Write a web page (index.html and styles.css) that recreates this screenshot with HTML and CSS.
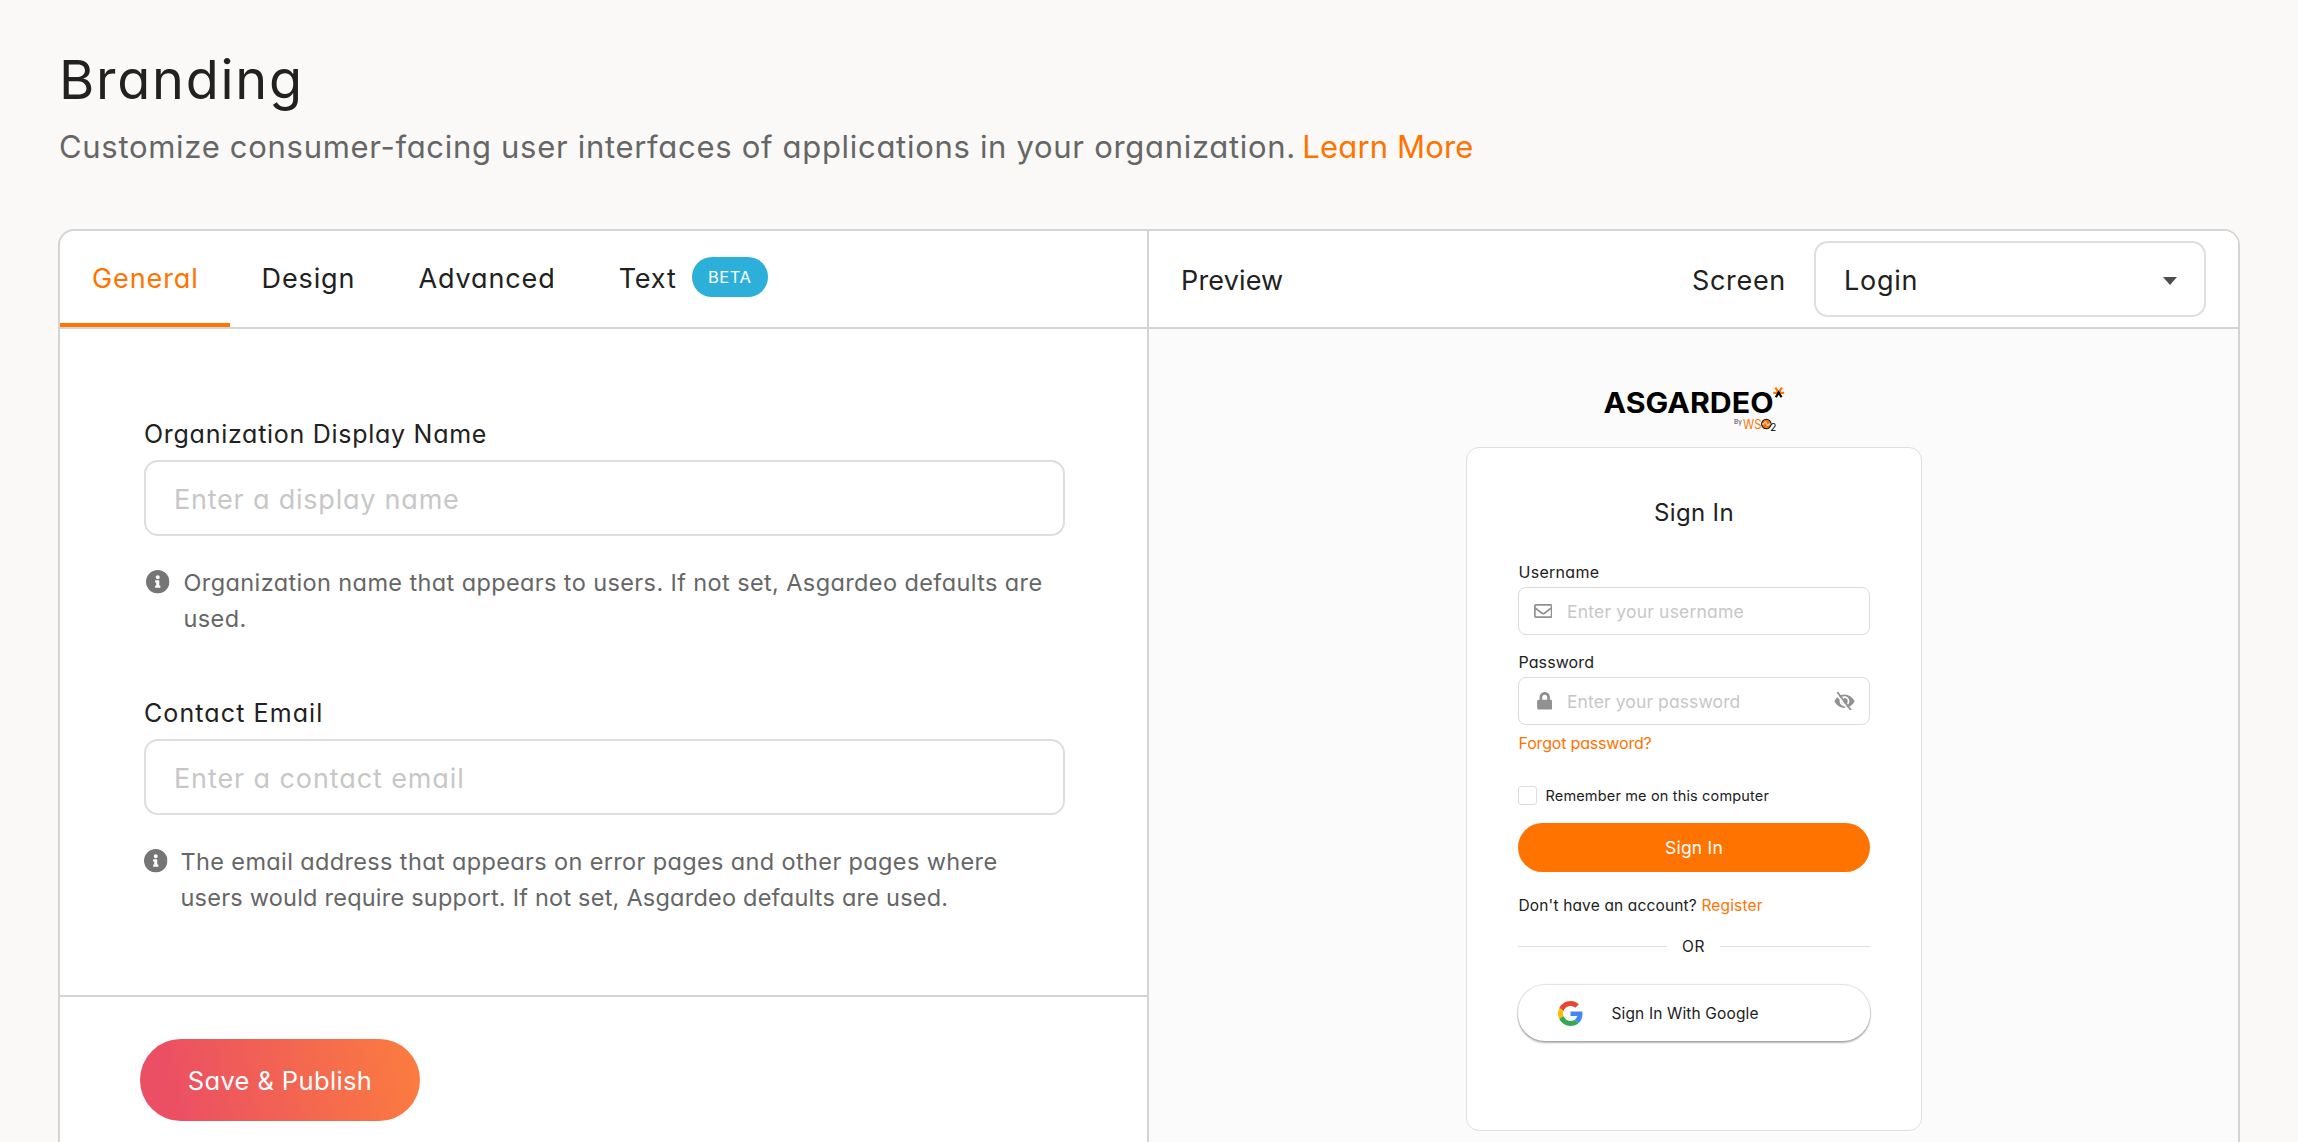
FILE: index.html
```
<!DOCTYPE html>
<html lang="en">
<head>
<meta charset="utf-8">
<title>Branding</title>
<link rel="stylesheet" href="styles.css">
</head>
<body>
<svg class="sprite" aria-hidden="true">
  <symbol id="info" viewBox="8 8 496 496"><path d="M256 8C119.043 8 8 119.083 8 256c0 136.997 111.043 248 248 248s248-111.003 248-248C504 119.083 392.957 8 256 8zm0 110c23.196 0 42 18.804 42 42s-18.804 42-42 42-42-18.804-42-42 18.804-42 42-42zm56 254c0 6.627-5.373 12-12 12h-88c-6.627 0-12-5.373-12-12v-24c0-6.627 5.373-12 12-12h12v-64h-12c-6.627 0-12-5.373-12-12v-24c0-6.627 5.373-12 12-12h64c6.627 0 12 5.373 12 12v100h12c6.627 0 12 5.373 12 12v24z"/></symbol>
</svg>
<header class="page-header">
  <h1>Branding</h1>
  <p><span>Customize consumer-facing user interfaces of applications in your organization.</span> <a href="#">Learn More</a></p>
</header>
<main class="panel">
  <section class="settings">
    <nav class="tabs">
      <a class="tab active" href="#">General</a>
      <a class="tab" href="#">Design</a>
      <a class="tab" href="#">Advanced</a>
      <a class="tab" href="#">Text <span class="badge">BETA</span></a>
    </nav>
    <form class="form">
      <div class="field">
        <label>Organization Display Name</label>
        <input type="text" placeholder="Enter a display name">
        <div class="hint hint-wide">
          <svg class="hint-icon"><use href="#info"/></svg>
          <span>Organization name that appears to users. If not set, Asgardeo defaults are<br>used.</span>
        </div>
      </div>
      <div class="field field-email">
        <label>Contact Email</label>
        <input type="text" placeholder="Enter a contact email">
        <div class="hint">
          <svg class="hint-icon"><use href="#info"/></svg>
          <span>The email address that appears on error pages and other pages where<br><span class="tight">users would require support. If not set, Asgardeo defaults are used.</span></span>
        </div>
      </div>
    </form>
    <footer class="actions"><button class="save">Save &amp; Publish</button></footer>
  </section>
  <section class="preview">
    <div class="preview-header">
      <span class="preview-title">Preview</span>
      <span class="screen-label">Screen</span>
      <div class="select"><span>Login</span><i class="caret"></i></div>
    </div>
    <div class="preview-body">
      <svg class="logo" width="181" height="44" viewBox="0 0 181 44">
        <text class="logo-name" x="-0.5" y="25.7" textLength="170" lengthAdjust="spacingAndGlyphs">ASGARDEO</text>
        <g fill="none" stroke-width="2.2">
          <path stroke="#ff7300" d="M174.2 5.6 171 .3M174.2 5.6 177.5 .3M174.2 5.6H168.9M174.2 5.6H179.8" transform="translate(.4 .2)"/>
          <path stroke="#000" d="M171.9 10.3 174.6 5.4 177.5 10.3"/>
        </g>
        <text class="logo-by" x="130" y="36.5">By</text>
        <text class="logo-wso" x="139" y="41.800" textLength="18.5" lengthAdjust="spacingAndGlyphs">WS</text>
        <circle cx="162.3" cy="37" r="4.7" fill="#ff7300" stroke="#111" stroke-width="1.1"/>
        <path d="M158 37h2l1.500-2.600 2 4.600 1.400-2h2" fill="none" stroke="#fff" stroke-width=".9"/>
        <text class="logo-two" x="166.300" y="43.600">2</text>
      </svg>
      <div class="login-card">
        <h2>Sign In</h2>
        <label class="login-label">Username</label>
        <div class="login-input">
          <svg class="mail" viewBox="0 64 512 384"><path d="M464 64H48C21.490 64 0 85.490 0 112v288c0 26.510 21.490 48 48 48h416c26.510 0 48-21.490 48-48V112c0-26.510-21.490-48-48-48zm0 48v40.805c-22.422 18.259-58.168 46.651-134.587 106.490-16.841 13.247-50.201 45.072-73.413 44.701-23.208.375-56.579-31.459-73.413-44.701C106.180 199.465 70.425 171.067 48 152.805V112h416zM48 400V214.398c22.914 18.251 55.409 43.862 104.938 82.646 21.857 17.205 60.134 55.186 103.062 54.955 42.717.231 80.509-37.199 103.053-54.947 49.528-38.783 82.032-64.401 104.947-82.653V400H48z"/></svg>
          <input type="text" placeholder="Enter your username">
        </div>
        <label class="login-label login-label-next">Password</label>
        <div class="login-input password">
          <svg class="lock" viewBox="0 0 448 512"><path d="M400 224h-24v-72C376 68.200 307.800 0 224 0S72 68.200 72 152v72H48c-26.500 0-48 21.500-48 48v192c0 26.500 21.500 48 48 48h352c26.500 0 48-21.500 48-48V272c0-26.500-21.500-48-48-48zm-104 0H152v-72c0-39.700 32.300-72 72-72s72 32.300 72 72v72z"/></svg>
          <input type="text" placeholder="Enter your password">
          <svg class="eye" viewBox="0 0 576 512">
            <path fill-rule="evenodd" d="M6 256C75 135 175 72 288 72s213 63 282 184c-69 121-169 184-282 184S75 377 6 256zM288 120a136 136 0 1 0 0 272 136 136 0 1 0 0-272z"/>
            <path d="M288 168a88 88 0 1 1-88 88c0-9 1-16 3-23a42 42 0 1 0 60-61c8-3 16-4 25-4z"/>
            <path d="M62 48 412 528" stroke="#fff" stroke-width="52"/>
            <path d="M103 22 458 490" stroke="#919191" stroke-width="52" stroke-linecap="round"/>
          </svg>
        </div>
        <a class="forgot" href="#">Forgot password?</a>
        <label class="remember"><i class="box"></i>Remember me on this computer</label>
        <button class="sign-in">Sign In</button>
        <p class="register">Don't have an account? <a href="#">Register</a></p>
        <div class="or"><span>OR</span></div>
        <button class="google">
          <svg viewBox="0 0 48 48" width="25" height="25">
            <path fill="#EA4335" d="M24 9.500c3.540 0 6.710 1.220 9.210 3.600l6.850-6.850C35.900 2.380 30.470 0 24 0 14.620 0 6.510 5.380 2.560 13.220l7.980 6.190C12.430 13.720 17.740 9.500 24 9.500z"/>
            <path fill="#4285F4" d="M46.980 24.550c0-1.570-.15-3.090-.38-4.550H24v9.020h12.940c-.58 2.960-2.260 5.480-4.780 7.180l7.730 6c4.510-4.180 7.090-10.360 7.090-17.650z"/>
            <path fill="#FBBC05" d="M10.530 28.590c-.48-1.450-.76-2.990-.76-4.590s.27-3.140.76-4.590l-7.980-6.190C.92 16.460 0 20.120 0 24s.92 7.540 2.560 10.780l7.970-6.190z"/>
            <path fill="#34A853" d="M24 48c6.480 0 11.930-2.130 15.890-5.810l-7.730-6c-2.150 1.450-4.920 2.300-8.160 2.300-6.260 0-11.570-4.220-13.470-9.910l-7.980 6.190C6.510 42.620 14.620 48 24 48z"/>
          </svg>
          <span>Sign In With Google</span>
        </button>
      </div>
    </div>
  </section>
</main>
</body>
</html>
```
FILE: styles.css
```
* { box-sizing: border-box; }
html, body { height: 100%; }
body {
  margin: 0;
  padding: 49px 58px 0;
  display: flex;
  flex-direction: column;
  overflow: hidden;
  background: #faf9f8;
  color: #212121;
  font-family: Inter, "Liberation Sans", sans-serif;
  font-feature-settings: "cv11";
}
a { color: #ff7300; text-decoration: none; }
button, input { font: inherit; font-feature-settings: inherit; letter-spacing: inherit; margin: 0; }
.sprite { display: none; }

.page-header { flex: none; height: 180px; padding-left: 1px; white-space: nowrap; }
h1 { margin: 0; font-size: 54px; font-weight: 400; line-height: 61px; letter-spacing: .032em; }
.page-header p { margin: 21px 0 0; font-size: 31px; line-height: 32px; color: #666; letter-spacing: .0225em; }
.page-header p a { letter-spacing: .005em; margin-left: -3px; }

.panel {
  flex: none;
  height: 960px;
  display: flex;
  border: 2px solid #d4d4d5;
  border-radius: 16px;
  background: #fff;
  overflow: hidden;
}
.settings { width: 1089px; flex: none; border-right: 2px solid #d4d4d5; }
.tabs { height: 98px; display: flex; border-bottom: 2px solid #d4d4d5; font-size: 27px; line-height: 96px; letter-spacing: .033em; }
.tab { height: 96px; padding: 0 31.5px; color: #212121; display: flex; }
.tab.active { width: 170px; padding-left: 32px; padding-right: 0; color: #ff7300; border-bottom: 4px solid #ff7300; }
.badge {
  width: 76px;
  height: 40px;
  margin: 26px 0 0 15px;
  border-radius: 20px;
  background: #2cb0da;
  color: #fff;
  font-size: 16.5px;
  line-height: 40px;
  letter-spacing: .03em;
  text-align: center;
}

.form { height: 666px; padding: 90px 82px 0 84px; }
.field { display: flex; flex-direction: column; }
.field-email { margin-top: 61px; }
.field label { font-size: 25px; line-height: 30px; letter-spacing: .029em; }
.field-email label { letter-spacing: .044em; }
.field input {
  height: 76px;
  margin-top: 11px;
  padding: 2px 28px 0;
  border: 2px solid #dededf;
  border-radius: 14px;
  font-size: 27px;
  letter-spacing: .029em;
  outline: 0;
}
.field-email input { letter-spacing: .033em; }
input::placeholder { color: #c7c7c7; opacity: 1; }
.hint { display: flex; margin-top: 29px; gap: 13px; font-size: 23.5px; line-height: 36px; letter-spacing: .0155em; color: #666; white-space: nowrap; }
.hint-wide { padding-left: 2px; gap: 14px; letter-spacing: .0165em; }
.tight { letter-spacing: .0095em; }
.hint-icon { width: 23.5px; height: 23.5px; margin-top: 5px; fill: #757575; flex: none; }

.actions { height: 400px; padding: 42px 80px; border-top: 2px solid #d4d4d5; }
.save {
  display: block;
  width: 280px;
  height: 82px;
  border: 0;
  border-radius: 41px;
  background: linear-gradient(77deg, #eb4f63 12%, #fb7b40 96%);
  color: #fff;
  font-size: 25.5px;
  letter-spacing: .015em;
}

.preview { flex: 1; background: #fbfbfb; }
.preview-header {
  height: 98px;
  padding: 0 32px;
  display: flex;
  align-items: center;
  border-bottom: 2px solid #d4d4d5;
  background: #fff;
  font-size: 27px;
  line-height: 34px;
}
.preview-title { padding-top: 3px; letter-spacing: .006em; }
.screen-label { padding-top: 3px; margin: 0 28px 0 auto; letter-spacing: .026em; }
.select {
  width: 392px;
  height: 76px;
  padding: 3px 27px 0 28px;
  display: flex;
  align-items: center;
  justify-content: space-between;
  border: 2px solid #dededf;
  border-radius: 14px;
  letter-spacing: .028em;
}
.caret { border: 7.5px solid transparent; border-top: 8px solid #4d4d4d; border-bottom: 0; }

.preview-body { padding-top: 58px; display: flex; flex-direction: column; align-items: center; }
.logo { display: block; overflow: visible; margin-left: 2px; }
.logo-name { font-size: 28px; font-weight: 700; }
.logo-by { font-size: 6.5px; fill: #444; }
.logo-wso { font-size: 13.5px; fill: #ff7300; }
.logo-two { font-size: 10px; }

.login-card {
  width: 456px;
  height: 684px;
  margin-top: 16px;
  padding: 49px 51px 0;
  display: flex;
  flex-direction: column;
  border: 1px solid #dfdfe0;
  border-radius: 13px;
  background: #fff;
}
h2 { margin: 0; font-size: 24px; font-weight: 400; line-height: 31px; letter-spacing: .014em; text-align: center; text-indent: 1px; }
.login-label { margin-top: 34px; padding-left: 1px; font-size: 16px; line-height: 20px; letter-spacing: .018em; }
.login-label-next { margin-top: 17px; letter-spacing: .006em; }
.login-input { height: 48px; margin-top: 5px; padding: 0 14px 0 15px; display: flex; align-items: center; border: 1px solid #dbdbe0; border-radius: 8px; }
.login-input svg { fill: #919191; flex: none; }
.login-input input { flex: 1; min-width: 0; padding: 0; border: 0; outline: 0; background: none; font-size: 17.5px; letter-spacing: .011em; }
.mail { width: 18.5px; height: 14px; margin-right: 15px; }
.lock { width: 15.5px; height: 17.5px; margin: 0 15px 0 3px; }
.password input { letter-spacing: .006em; }
.eye { width: 21px; height: 18.5px; }
.forgot { margin-top: 8px; padding-left: 1px; font-size: 16px; line-height: 20px; letter-spacing: -.011em; }
.remember { margin-top: 33px; height: 19px; display: flex; align-items: center; font-size: 14.5px; letter-spacing: .011em; }
.box { width: 19px; height: 19px; margin-right: 9px; border: 1px solid #dbdbdd; border-radius: 3px; }
.sign-in { height: 49px; margin-top: 18px; border: 0; border-radius: 25px; background: #ff7300; color: #fff; font-size: 17.5px; letter-spacing: .012em; text-indent: 1px; }
.register { margin: 24px 0 0; padding-left: 1px; font-size: 15.5px; line-height: 20px; letter-spacing: .01em; }
.or { height: 21px; margin-top: 20px; display: flex; align-items: center; gap: 15px; font-size: 15.5px; letter-spacing: .04em; }
.or::before, .or::after { content: ""; flex: 1; height: 1px; background: #dedede; }
.google {
  height: 56px;
  margin-top: 28px;
  padding: 0 40px;
  display: flex;
  align-items: center;
  gap: 29px;
  border: 0;
  border-radius: 27px;
  background: #fff;
  color: #212121;
  font-size: 15.5px;
  letter-spacing: .009em;
  box-shadow: 0 0 1px 1px rgba(0, 0, 0, .12), 0 2px 2px rgba(0, 0, 0, .28);
}
```
